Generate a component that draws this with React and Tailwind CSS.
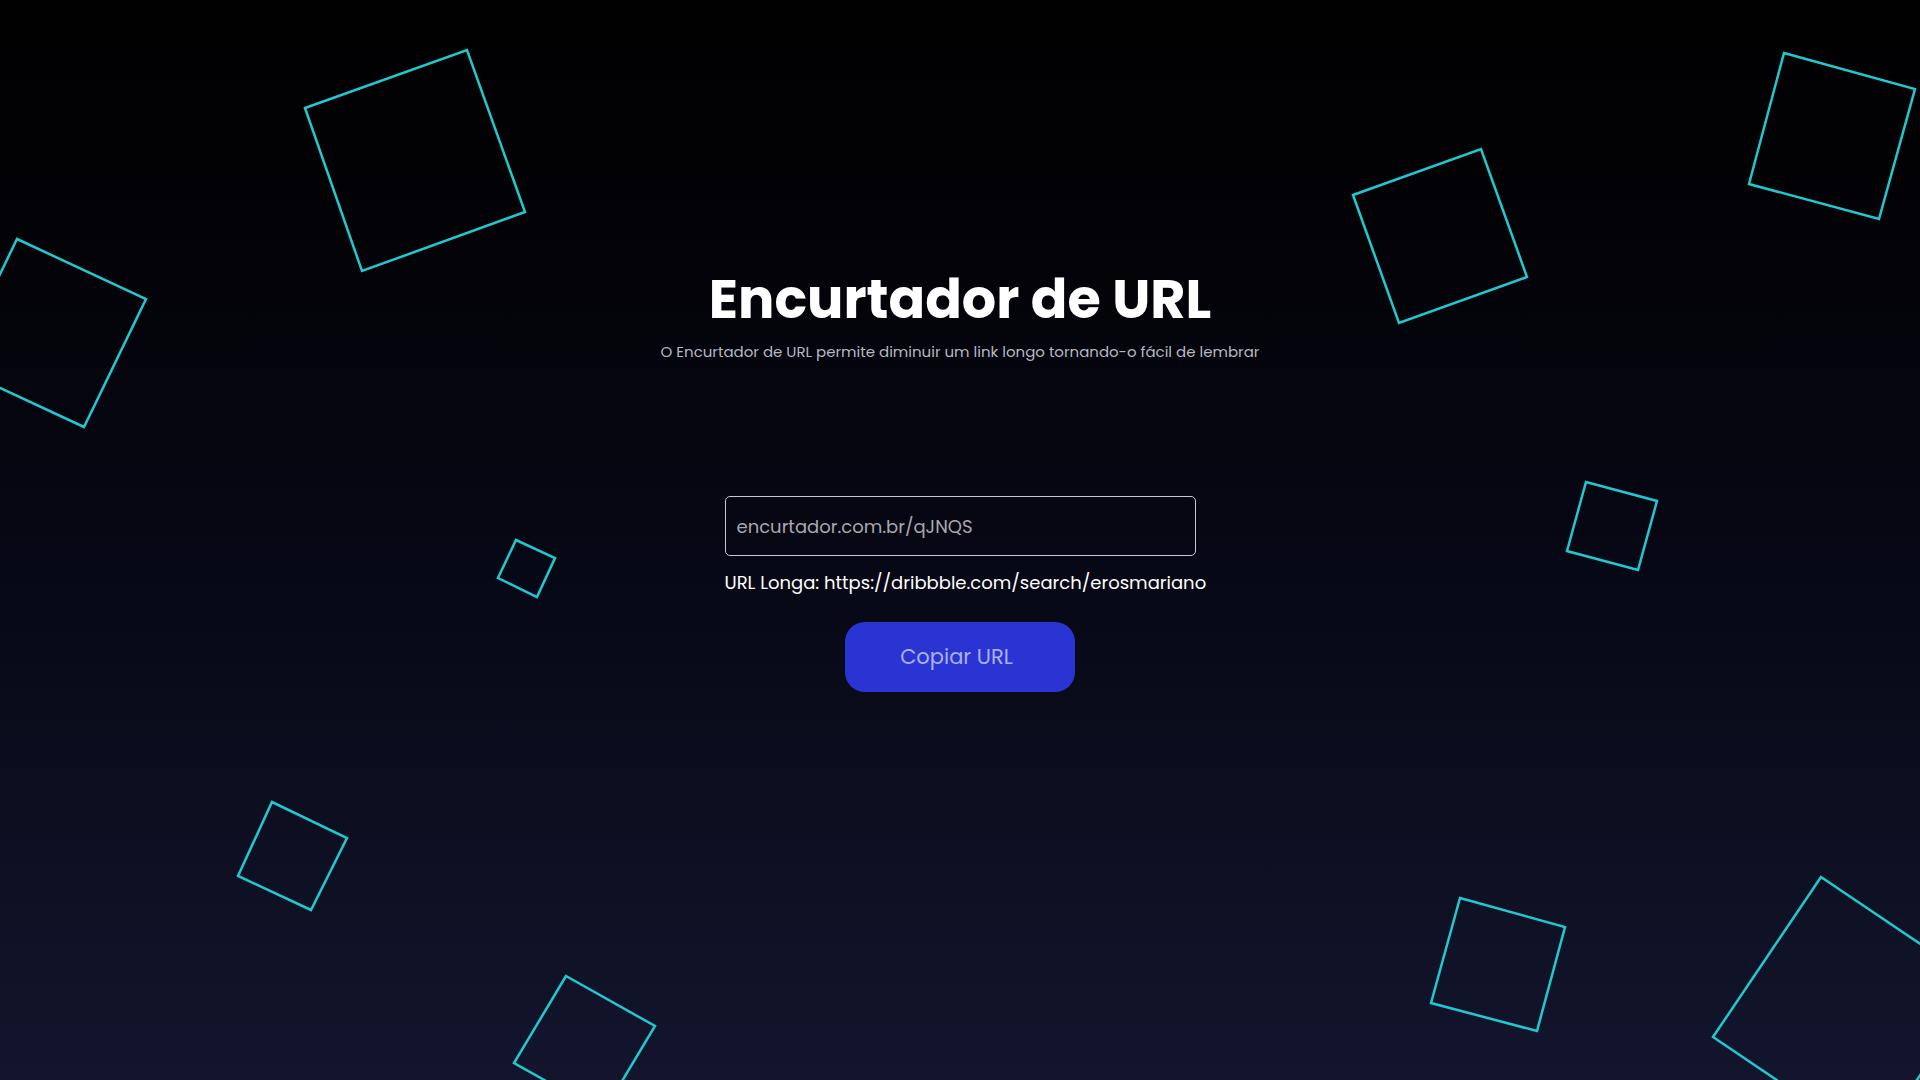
import React from "react";

const squares = [
  "305,108 467,50 525,212 362,271",
  "17,239 146,299 84,427 -45,367",
  "516,540 555,558 537,597 498,578",
  "272,802 347,838 311,910 238,876",
  "566,976 655,1026 603,1113 514,1063",
  "1353,195 1481,149 1527,277 1399,323",
  "1784,53 1915,89 1879,219 1749,184",
  "1586,482 1657,501 1638,570 1567,551",
  "1460,898 1565,927 1537,1031 1431,1003",
  "1821,877 1981,985 1873,1145 1713,1037",
];

export default function App() {
  return (
    <div
      className="relative w-full h-[1080px] overflow-hidden bg-gradient-to-b from-[#010102] to-[#13152d]"
      style={{ fontFamily: '"Poppins", Inter, "Noto Sans", sans-serif' }}
    >
      <svg
        className="absolute inset-0 pointer-events-none"
        width="1920"
        height="1080"
        viewBox="0 0 1920 1080"
      >
        {squares.map((p, i) => (
          <polygon key={i} points={p} fill="none" stroke="#20c9cf" strokeWidth="2.5" strokeLinejoin="miter" />
        ))}
      </svg>

      <div className="relative flex flex-col items-center pt-[273px]">
        <h1 className="text-[54px] leading-[53px] font-bold text-white">
          Encurtador de URL
        </h1>
        <p className="mt-[14px] text-[15px] leading-6 text-[#b8b8c2]">
          O Encurtador de URL permite diminuir um link longo tornando-o fácil de lembrar
        </p>

        <div className="mt-[132px] w-[471px] h-[60px] rounded-[5px] border border-[#c9c9cc] flex items-center px-[11px]">
          <input
            className="w-full bg-transparent outline-none text-[18px] text-[#a9a9ae] placeholder-[#a9a9ae]"
            defaultValue="encurtador.com.br/qJNQS"
          />
        </div>

        <p className="mt-[13px] w-[471px] text-[18px] leading-7 text-white whitespace-nowrap">
          URL Longa: https://dribbble.com/search/erosmariano
        </p>

        <button className="mt-[25px] w-[230px] h-[70px] rounded-[20px] bg-[#2a34d2] pr-[7px] text-[21px] text-[#aab0f2]">
          Copiar URL
        </button>
      </div>
    </div>
  );
}
